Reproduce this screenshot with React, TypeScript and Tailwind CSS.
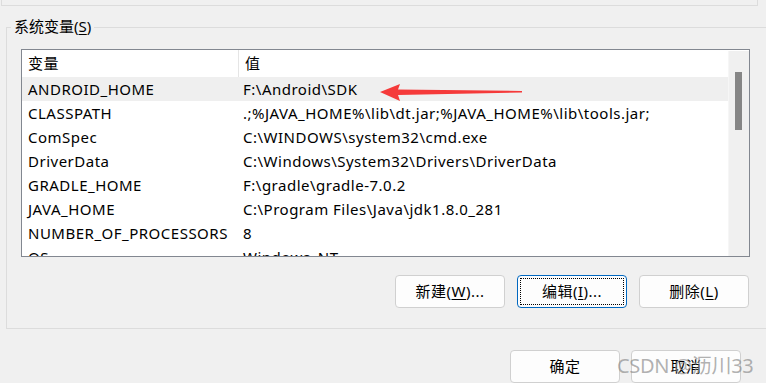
import React from "react";

const rows: [string, string][] = [
  ["ANDROID_HOME", "F:\\Android\\SDK"],
  ["CLASSPATH", ".;%JAVA_HOME%\\lib\\dt.jar;%JAVA_HOME%\\lib\\tools.jar;"],
  ["ComSpec", "C:\\WINDOWS\\system32\\cmd.exe"],
  ["DriverData", "C:\\Windows\\System32\\Drivers\\DriverData"],
  ["GRADLE_HOME", "F:\\gradle\\gradle-7.0.2"],
  ["JAVA_HOME", "C:\\Program Files\\Java\\jdk1.8.0_281"],
  ["NUMBER_OF_PROCESSORS", "8"],
  ["OS", "Windows_NT"],
];

const Btn = ({
  children,
  focused,
}: {
  children: React.ReactNode;
  focused?: boolean;
}) => (
  <div
    className={
      "w-[110px] h-[33px] rounded-[4px] bg-[#fdfdfd] flex items-center justify-center text-[15px] tracking-[0.5px] text-black " +
      (focused ? "border border-[#0067c0] p-[2px]" : "border border-[#d0d0d0]")
    }
  >
    {focused ? (
      <div className="w-full h-full border border-dotted border-black flex items-center justify-center">
        {children}
      </div>
    ) : (
      children
    )}
  </div>
);

export default function App() {
  return (
    <div
      className="relative w-[766px] h-[383px] overflow-hidden bg-[#f0f0f0] text-black"
      style={{ fontFamily: '"Noto Sans", "Noto Sans CJK SC", sans-serif' }}
    >
      {/* bottom of the user variables group */}
      <div className="ml-[1px] w-[757px] h-[6px] border-l border-r border-b border-[#dcdcdc]" />

      {/* system variables group */}
      <div className="relative mt-[21px] ml-[6px] w-[780px] h-[302px] border-t border-l border-b border-[#dcdcdc]">
        <div className="absolute left-[4px] top-[-12px] px-[3px] bg-[#f0f0f0] text-[15px] leading-[20px]">
          系统变量(<span className="underline underline-offset-2">S</span>)
        </div>

        <div className="mt-[21px] ml-[14px] w-[729px] h-[208px] border border-[#828790] bg-white flex overflow-hidden">
          <div className="w-[706px] text-[15px] tracking-[0.5px]">
            <div className="h-[27px] flex items-center">
              <div className="w-[217px] pl-[6px] h-full flex items-center border-r border-[#e5e5e5]">变量</div>
              <div className="pl-[6px]">值</div>
            </div>
            {rows.map(([k, v], i) => (
              <div
                key={k}
                className={"h-[24px] flex items-center " + (i === 0 ? "bg-[#efefef]" : "")}
              >
                <div className="w-[218px] pl-[6px] whitespace-nowrap">{k}</div>
                <div className="pl-[3px] whitespace-nowrap">{v}</div>
              </div>
            ))}
          </div>
          <div className="w-[21px] mt-[1px] bg-[#f0f0f0] border-l border-[#f6f6f6] pt-[21px] pl-[6px]">
            <div className="w-[7px] h-[58px] bg-[#868686]" />
          </div>
        </div>

        <div className="mt-[18px] ml-[388px] flex gap-[12px]">
          <Btn>
            新建(<span className="underline underline-offset-2">W</span>)...
          </Btn>
          <Btn focused>
            编辑(<span className="underline underline-offset-2">I</span>)...
          </Btn>
          <Btn>
            删除(<span className="underline underline-offset-2">L</span>)
          </Btn>
        </div>
      </div>

      <div className="mt-[21px] ml-[510px] flex gap-[11px]">
        <Btn>确定</Btn>
        <Btn>取消</Btn>
      </div>

      {/* red arrow annotation */}
      <svg
        className="absolute left-[378px] top-[82px]"
        width="146"
        height="20"
        viewBox="0 0 146 20"
      >
        <polygon
          points="2,10 22,2 20,7.5 144,9 144,10.5 20,13 22,19"
          fill="#f53a3a"
        />
      </svg>

      {/* watermark */}
      <div className="absolute left-[617px] top-[352px] text-[20px] leading-[28px] tracking-[-0.3px] text-[#8f8f8f]/70 whitespace-nowrap">
        CSDN @沥川33
      </div>
    </div>
  );
}
